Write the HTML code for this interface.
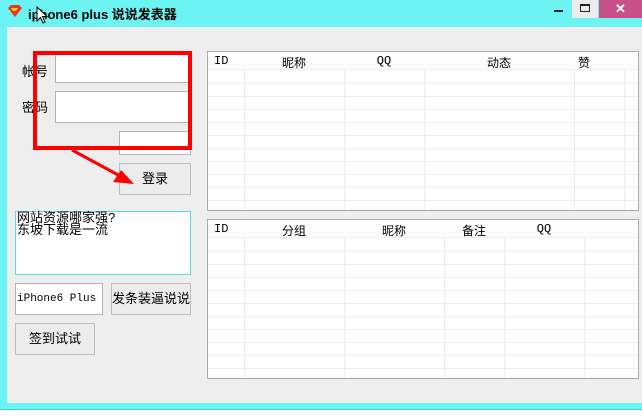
<!DOCTYPE html>
<html><head><meta charset="utf-8"><style>
*{margin:0;padding:0;box-sizing:border-box}
body{width:642px;height:417px;overflow:hidden;background:#fff;font-family:"Liberation Sans","Noto Sans CJK SC",sans-serif;font-size:12px;position:relative}
.a{position:absolute}
.frame{left:0;top:0;width:642px;height:410px;background:#6cf3f3;border-bottom:1px solid #4cc;}
.client{left:7px;top:27px;width:635px;height:376px;background:#eeeeee}
.inp{background:#fff;border:1px solid #b3b3b3}
.btn{background:#ececec;border:1px solid #bcbcbc;text-align:center;font-size:13px;color:#000}
.tbl{background:#fff;border:1px solid #a8abab;overflow:hidden}
.hd{position:absolute;left:0;top:0;right:0;height:18px;background:#fcfcfc;border-bottom:1px solid #e6f4f8;font-family:"Liberation Mono","Noto Sans CJK SC",monospace;font-size:12px}
.hd span{position:absolute;top:2px;text-align:center}
.vl{position:absolute;top:0;bottom:0;width:1px;background:#eaeeee}
.rows{position:absolute;left:0;right:0;bottom:0;background:repeating-linear-gradient(to bottom,#fff 0 12px,#ececec 12px 13px)}
</style></head><body>
<div class="a frame"></div>
<svg class="a" style="left:7px;top:5px" width="16" height="12" viewBox="0 0 16 12"><path d="M1 3 L4 0 H12 L15 3 L8 12 Z" fill="#e8352a"/><path d="M4 3 H11 L9 6 H6 Z" fill="#f6d21c"/></svg>
<div class="a" style="left:28px;top:4px;font-weight:bold;font-size:13px">iphone6 plus 说说发表器</div>
<svg class="a" style="left:36px;top:6px" width="12" height="18"><path d="M1 1 V15 L4.5 11.5 L7 17 L9 16 L6.5 10.5 H11 Z" fill="#fff" stroke="#000"/></svg>
<div class="a" style="left:554px;top:10px;width:9px;height:2px;background:#222"></div>
<div class="a" style="left:572px;top:0;width:26px;height:18px;background:#ececec"></div>
<div class="a" style="left:580px;top:4px;width:10px;height:8px;border:1px solid #222;border-top-width:2px"></div>
<div class="a" style="left:599px;top:0;width:43px;height:18px;background:#c75089;color:#fff;text-align:center;font-size:13px;font-weight:bold;line-height:17px">✕</div>
<div class="a client"></div>

<div class="a" style="left:22px;top:61px;font-size:13px">帐号</div>
<div class="a" style="left:22px;top:97px;font-size:13px">密码</div>
<div class="a inp" style="left:55px;top:51px;width:136px;height:32px"></div>
<div class="a inp" style="left:55px;top:91px;width:136px;height:32px"></div>
<div class="a inp" style="left:119px;top:131px;width:72px;height:24px"></div>
<div class="a btn" style="left:119px;top:163px;width:72px;height:32px;line-height:30px">登录</div>
<div class="a" style="left:33px;top:51px;width:159px;height:99px;border:4px solid #f00"></div>
<svg class="a" style="left:0;top:0" width="200" height="200"><line x1="72" y1="150" x2="120" y2="176" stroke="#f00" stroke-width="3"/><path d="M134 184 L113 182 L121 170 Z" fill="#f00"/></svg>

<div class="a" style="left:15px;top:211px;width:176px;height:64px;background:#fff;border:1px solid #5fd8e0;padding:0 1px;font-size:13px;line-height:12px">网站资源哪家强?<br>东坡下载是一流</div>
<div class="a inp" style="left:15px;top:283px;width:88px;height:32px;font-family:'Liberation Mono',monospace;font-size:11px;line-height:30px;padding-left:1px">iPhone6 Plus</div>
<div class="a btn" style="left:111px;top:283px;width:80px;height:32px;line-height:30px">发条装逼说说</div>
<div class="a btn" style="left:15px;top:323px;width:80px;height:32px;line-height:30px">签到试试</div>

<div class="a tbl" style="left:207px;top:51px;width:432px;height:160px">
<div class="rows" style="top:19px"></div>
<div class="vl" style="left:36px"></div><div class="vl" style="left:136px"></div><div class="vl" style="left:216px"></div><div class="vl" style="left:366px"></div><div class="vl" style="left:416px"></div>
<div class="hd"><span style="left:6px">ID</span><span style="left:36px;width:100px">昵称</span><span style="left:136px;width:80px">QQ</span><span style="left:216px;width:150px">动态</span><span style="left:366px;width:20px">赞</span></div>
</div>

<div class="a tbl" style="left:207px;top:219px;width:432px;height:160px">
<div class="rows" style="top:19px"></div>
<div class="vl" style="left:36px"></div><div class="vl" style="left:136px"></div><div class="vl" style="left:236px"></div><div class="vl" style="left:296px"></div><div class="vl" style="left:376px"></div>
<div class="hd"><span style="left:6px">ID</span><span style="left:36px;width:100px">分组</span><span style="left:136px;width:100px">昵称</span><span style="left:236px;width:60px">备注</span><span style="left:296px;width:80px">QQ</span></div>
</div>
</body></html>
